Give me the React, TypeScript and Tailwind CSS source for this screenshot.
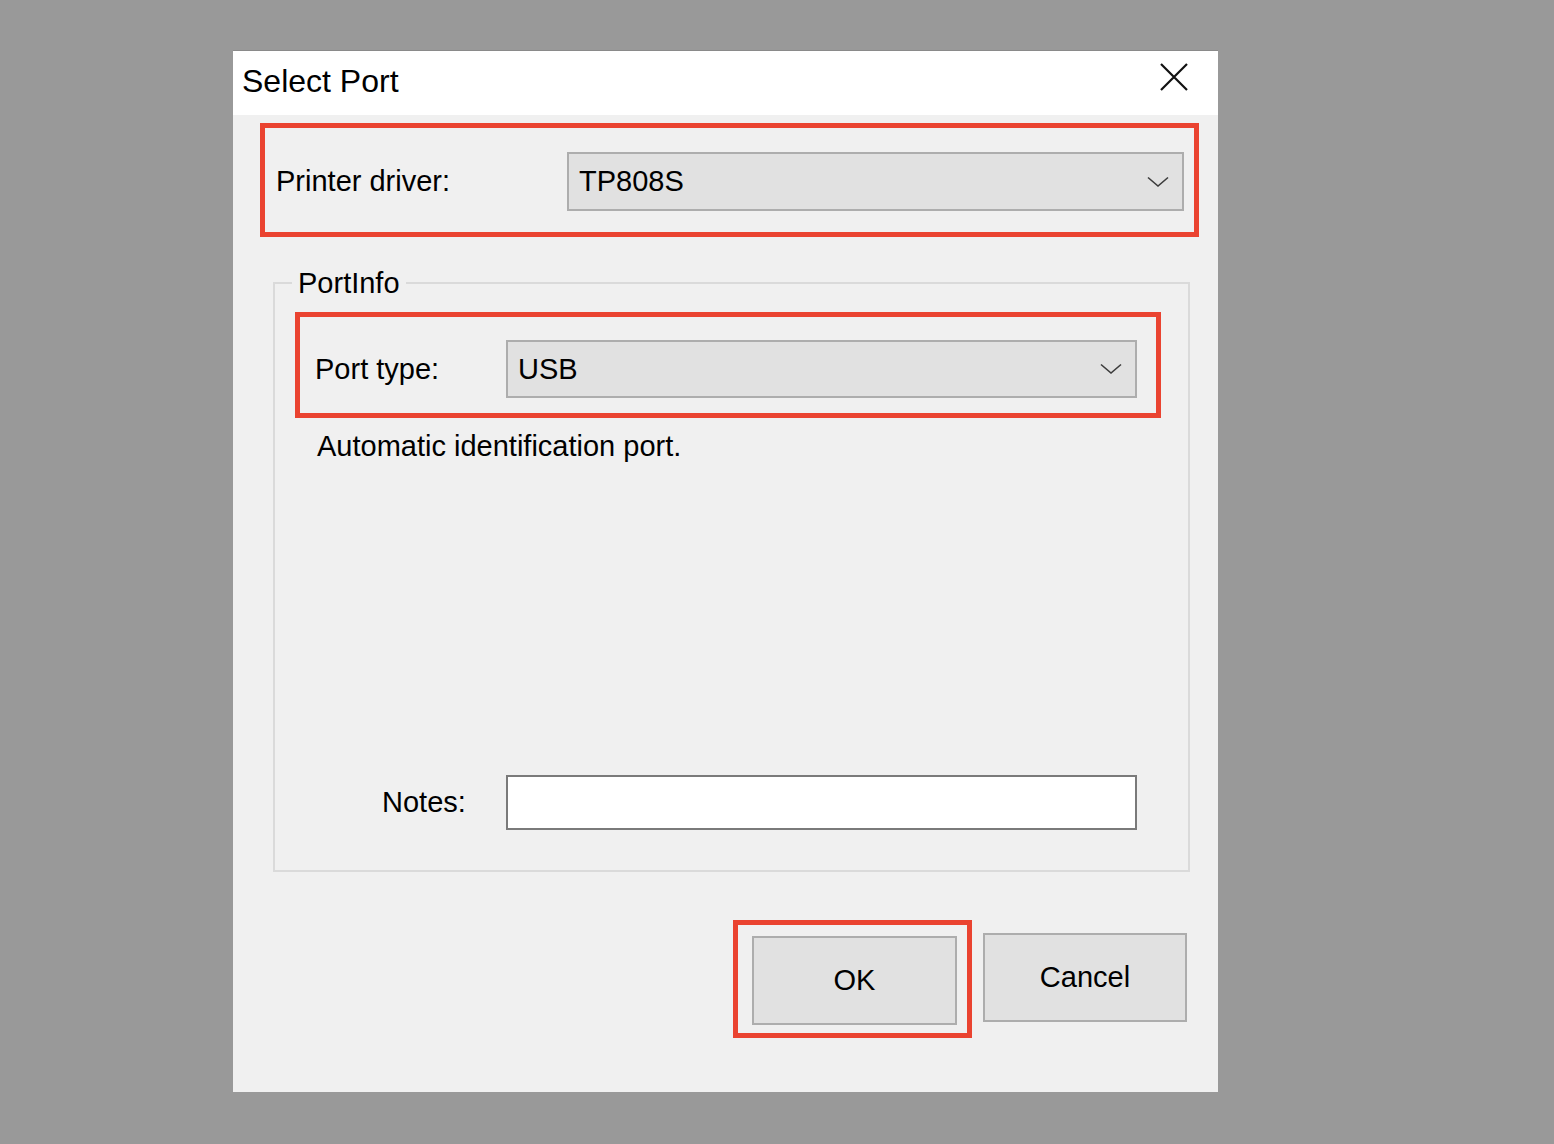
import React from "react";

const Chevron = () => (
  <svg width="22" height="12" viewBox="0 0 22 12" fill="none">
    <polyline points="1,1.5 11,10 21,1.5" stroke="#3c3c3c" strokeWidth="1.6" />
  </svg>
);

const Combo = ({ value, width }: { value: string; width: string }) => (
  <div
    className={`${width} h-full flex items-center justify-between bg-[#e1e1e1] border-2 border-[#adadad] pl-[10px] pr-[13px]`}
  >
    <span className="text-[29px] leading-none text-black">{value}</span>
    <Chevron />
  </div>
);

export default function App() {
  return (
    <div
      className="min-h-screen w-full bg-[#999999] pt-[50px] pl-[233px]"
      style={{ fontFamily: '"Liberation Sans", Arial, sans-serif' }}
    >
      <div className="w-[985px] h-[1042px] bg-[#f0f0f0] border-t border-[#8a8a8a] flex flex-col">
        {/* title bar */}
        <div className="h-[64px] bg-white flex items-center justify-between pl-[9px] pr-[29px]">
          <span className="mb-[4px] text-[32px] leading-none text-black">Select Port</span>
          <svg className="mb-[12px]" width="30" height="30" viewBox="0 0 30 30" fill="none">
            <path d="M2 2 L28 28 M28 2 L2 28" stroke="#111" strokeWidth="2.2" />
          </svg>
        </div>

        <div className="flex flex-col pl-[27px] pr-[19px] pt-[8px]">
          {/* printer driver */}
          <div className="h-[114px] border-[5px] border-[#ea4330] flex pt-[24px] pb-[21px] pl-[11px] pr-[10px]">
            <div className="flex-1 flex items-center text-[29px] leading-none text-black">
              Printer driver:
            </div>
            <Combo value="TP808S" width="w-[617px]" />
          </div>

          {/* port info group */}
          <fieldset className="mt-[31px] ml-[13px] mr-[9px] border-2 border-[#dadada] pb-[40px]">
            <legend className="ml-[17px] px-[6px] text-[29px] leading-[30px] text-black">
              PortInfo
            </legend>

            <div className="mt-[14px] ml-[20px] mr-[27px] h-[106px] border-[5px] border-[#ea4330] flex pt-[23px] pb-[15px] pl-[15px] pr-[19px]">
              <div className="flex-1 flex items-center text-[29px] leading-none text-black">
                Port type:
              </div>
              <Combo value="USB" width="w-[631px]" />
            </div>

            <p className="mt-[11px] ml-[42px] text-[29px] leading-[34px] text-black">
              Automatic identification port.
            </p>

            <div className="mt-[312px] flex items-center pl-[107px]">
              <span className="w-[124px] text-[29px] leading-none text-black">Notes:</span>
              <div className="w-[631px] h-[55px] bg-white border-2 border-[#7a7a7a]" />
            </div>
          </fieldset>

          {/* buttons */}
          <div className="mt-[48px] flex justify-end items-start gap-[11px] pr-[12px]">
            <div className="w-[239px] h-[118px] border-[5px] border-[#ea4330] pt-[11px] pl-[14px]">
              <button className="w-[205px] h-[89px] bg-[#e1e1e1] border-2 border-[#adadad] text-[29px] text-black">
                OK
              </button>
            </div>
            <button className="mt-[13px] w-[204px] h-[89px] bg-[#e1e1e1] border-2 border-[#adadad] text-[29px] text-black">
              Cancel
            </button>
          </div>
        </div>
      </div>
    </div>
  );
}
